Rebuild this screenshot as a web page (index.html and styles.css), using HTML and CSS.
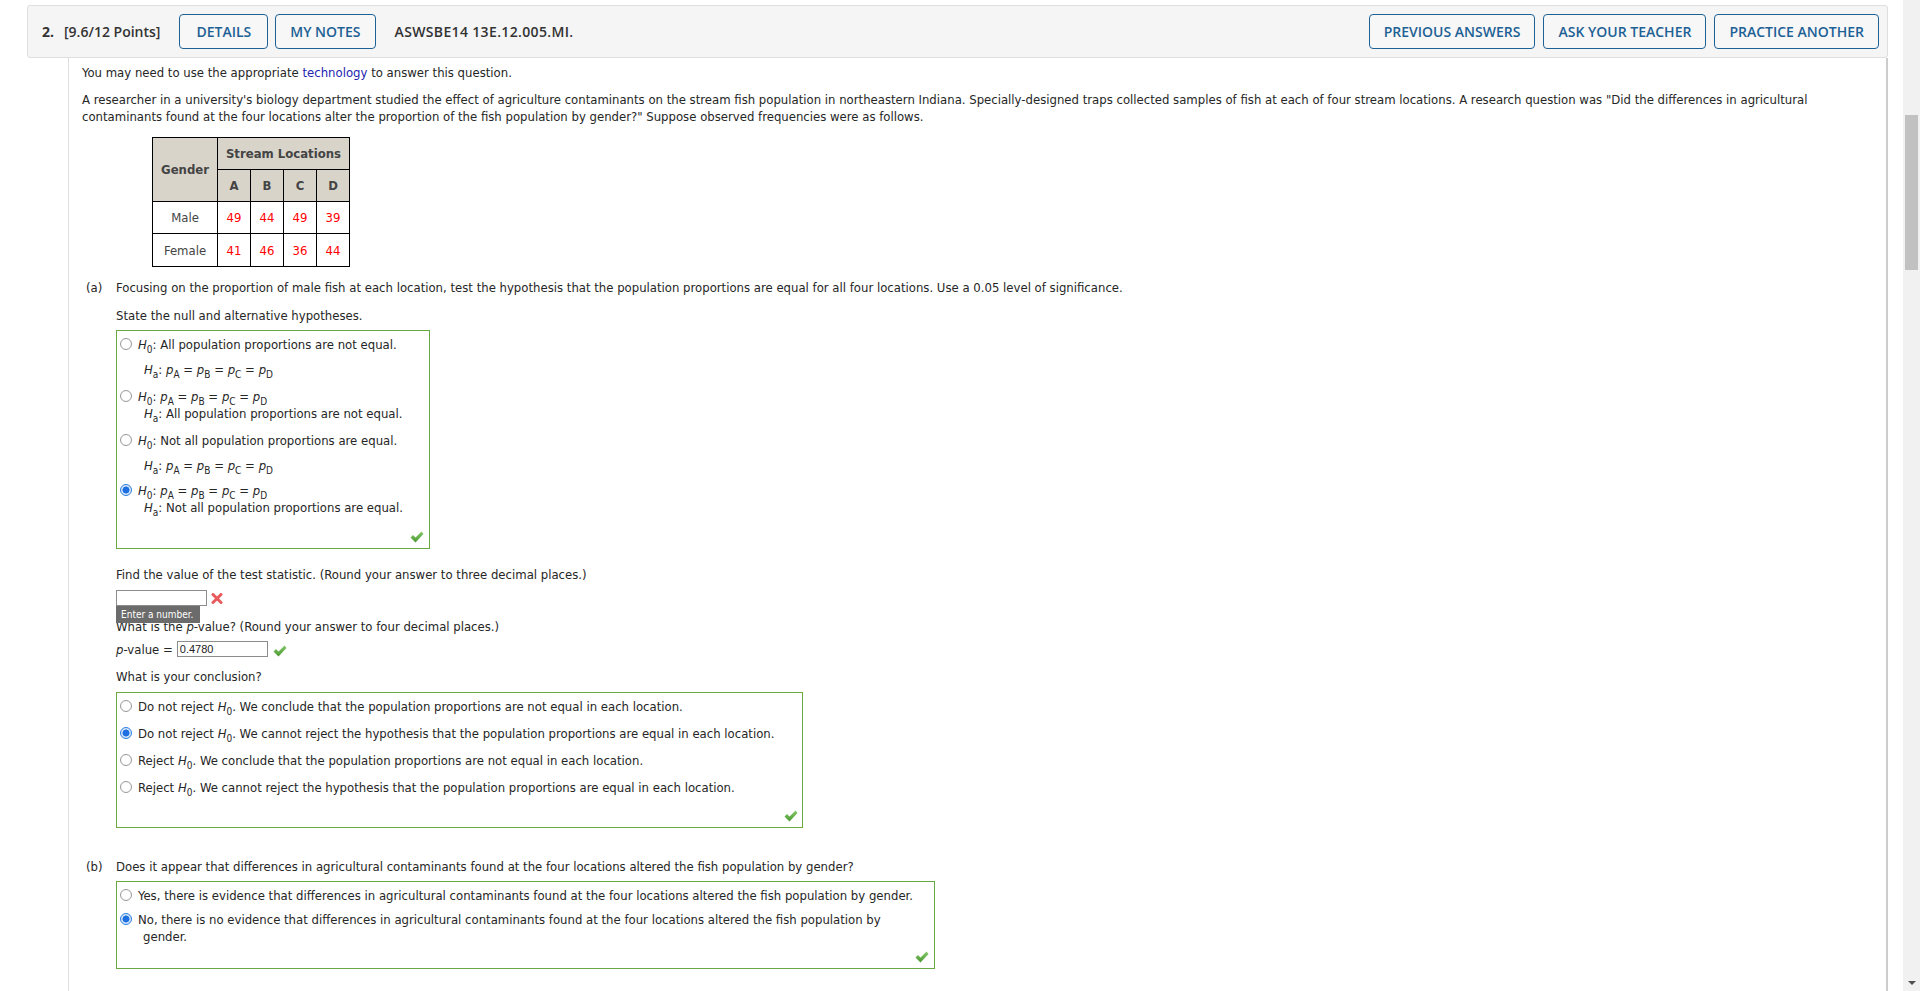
FILE: index.html
```html
<!DOCTYPE html>
<html>
<head>
<meta charset="utf-8">
<link rel="stylesheet" href="styles.css">
</head>
<body>
<div class="page">
  <div class="qhead">
    <span class="qnum">2.</span>
    <span class="qpts">[9.6/12 Points]</span>
    <span class="btn b-details">DETAILS</span>
    <span class="btn b-notes">MY NOTES</span>
    <span class="qid">ASWSBE14 13E.12.005.MI.</span>
    <span class="spacer"></span>
    <span class="btn">PREVIOUS ANSWERS</span>
    <span class="btn">ASK YOUR TEACHER</span>
    <span class="btn">PRACTICE ANOTHER</span>
  </div>
  <div class="qbody">
    <p class="p1">You may need to use the appropriate <span class="link">technology</span> to answer this question.</p>
    <p class="p2">A researcher in a university's biology department studied the effect of agriculture contaminants on the stream fish population in northeastern Indiana. Specially-designed traps collected samples of fish at each of four stream locations. A research question was "Did the differences in agricultural<br>contaminants found at the four locations alter the proportion of the fish population by gender?" Suppose observed frequencies were as follows.</p>
    <table class="data">
      <tr><th rowspan="2" class="gh">Gender</th><th colspan="4" class="sh">Stream Locations</th></tr>
      <tr><th>A</th><th>B</th><th>C</th><th>D</th></tr>
      <tr class="r1"><td class="rl">Male</td><td class="v">49</td><td class="v">44</td><td class="v">49</td><td class="v">39</td></tr>
      <tr class="r2"><td class="rl">Female</td><td class="v">41</td><td class="v">46</td><td class="v">36</td><td class="v">44</td></tr>
    </table>

    <div class="part pa">
      <div class="plabel">(a)</div>
      <div class="pcol">
        <div class="ln">Focusing on the proportion of male fish at each location, test the hypothesis that the population proportions are equal for all four locations. Use a 0.05 level of significance.</div>
        <div class="ln st">State the null and alternative hypotheses.</div>
        <div class="box hyp">
          <div class="opt o1">
            <span class="radio"></span>
            <div class="lbl">
              <div class="ln"><i>H</i><sub>0</sub>: All population proportions are not equal.</div>
              <div class="ln m ind"><i>H</i><sub>a</sub>: <i>p</i><sub>A</sub> = <i>p</i><sub>B</sub> = <i>p</i><sub>C</sub> = <i>p</i><sub>D</sub></div>
            </div>
          </div>
          <div class="opt o2 mf">
            <span class="radio"></span>
            <div class="lbl">
              <div class="ln m"><i>H</i><sub>0</sub>: <i>p</i><sub>A</sub> = <i>p</i><sub>B</sub> = <i>p</i><sub>C</sub> = <i>p</i><sub>D</sub></div>
              <div class="ln ind"><i>H</i><sub>a</sub>: All population proportions are not equal.</div>
            </div>
          </div>
          <div class="opt o3">
            <span class="radio"></span>
            <div class="lbl">
              <div class="ln"><i>H</i><sub>0</sub>: Not all population proportions are equal.</div>
              <div class="ln m ind"><i>H</i><sub>a</sub>: <i>p</i><sub>A</sub> = <i>p</i><sub>B</sub> = <i>p</i><sub>C</sub> = <i>p</i><sub>D</sub></div>
            </div>
          </div>
          <div class="opt o4 mf">
            <span class="radio on"></span>
            <div class="lbl">
              <div class="ln m"><i>H</i><sub>0</sub>: <i>p</i><sub>A</sub> = <i>p</i><sub>B</sub> = <i>p</i><sub>C</sub> = <i>p</i><sub>D</sub></div>
              <div class="ln ind"><i>H</i><sub>a</sub>: Not all population proportions are equal.</div>
            </div>
          </div>
          <div class="mark hyp-mark"><svg class="check" width="14" height="12" viewBox="0 0 14 12"><defs><linearGradient id="g1" x1="0" y1="0" x2="0" y2="1"><stop offset="0" stop-color="#86c96a"/><stop offset="1" stop-color="#4a9a32"/></linearGradient></defs><polygon points="0.5,6.5 3,4 5.5,6.5 11.5,0.5 13.5,3 5.5,11.5" fill="url(#g1)"/></svg></div>
        </div>

        <div class="ln fv">Find the value of the test statistic. (Round your answer to three decimal places.)</div>
        <div class="inrow ts">
          <span class="inwrap"><span class="input"></span><span class="tip">Enter a number.</span></span>
          <svg class="cross" width="12" height="11" viewBox="0 0 12 11"><path d="M2 1.5 L10 9.5 M10 1.5 L2 9.5" stroke="#e85a5c" stroke-width="3" stroke-linecap="round"/></svg>
        </div>
        <div class="ln pq">What is the <i>p</i>-value? (Round your answer to four decimal places.)</div>
        <div class="inrow pv">
          <span class="pl"><i>p</i>-value =</span>
          <span class="input val">0.4780</span>
          <svg class="check" width="14" height="12" viewBox="0 0 14 12"><defs><linearGradient id="g2" x1="0" y1="0" x2="0" y2="1"><stop offset="0" stop-color="#86c96a"/><stop offset="1" stop-color="#4a9a32"/></linearGradient></defs><polygon points="0.5,6.5 3,4 5.5,6.5 11.5,0.5 13.5,3 5.5,11.5" fill="url(#g2)"/></svg>
        </div>
        <div class="ln wc">What is your conclusion?</div>
        <div class="box conc">
          <div class="copt first"><span class="radio"></span><div class="lbl">Do not reject <i>H</i><sub>0</sub>. We conclude that the population proportions are not equal in each location.</div></div>
          <div class="copt"><span class="radio on"></span><div class="lbl">Do not reject <i>H</i><sub>0</sub>. We cannot reject the hypothesis that the population proportions are equal in each location.</div></div>
          <div class="copt"><span class="radio"></span><div class="lbl">Reject <i>H</i><sub>0</sub>. We conclude that the population proportions are not equal in each location.</div></div>
          <div class="copt"><span class="radio"></span><div class="lbl">Reject <i>H</i><sub>0</sub>. We cannot reject the hypothesis that the population proportions are equal in each location.</div></div>
          <div class="mark conc-mark"><svg class="check" width="14" height="12" viewBox="0 0 14 12"><defs><linearGradient id="g3" x1="0" y1="0" x2="0" y2="1"><stop offset="0" stop-color="#86c96a"/><stop offset="1" stop-color="#4a9a32"/></linearGradient></defs><polygon points="0.5,6.5 3,4 5.5,6.5 11.5,0.5 13.5,3 5.5,11.5" fill="url(#g3)"/></svg></div>
        </div>
      </div>
    </div>

    <div class="part pb">
      <div class="plabel">(b)</div>
      <div class="pcol">
        <div class="ln">Does it appear that differences in agricultural contaminants found at the four locations altered the fish population by gender?</div>
        <div class="box bbox">
          <div class="copt first"><span class="radio"></span><div class="lbl">Yes, there is evidence that differences in agricultural contaminants found at the four locations altered the fish population by gender.</div></div>
          <div class="copt second"><span class="radio on"></span><div class="lbl hang">No, there is no evidence that differences in agricultural contaminants found at the four locations altered the fish population by<br>gender.</div></div>
          <div class="mark b-mark"><svg class="check" width="14" height="12" viewBox="0 0 14 12"><defs><linearGradient id="g4" x1="0" y1="0" x2="0" y2="1"><stop offset="0" stop-color="#86c96a"/><stop offset="1" stop-color="#4a9a32"/></linearGradient></defs><polygon points="0.5,6.5 3,4 5.5,6.5 11.5,0.5 13.5,3 5.5,11.5" fill="url(#g4)"/></svg></div>
        </div>
      </div>
    </div>
  </div>
</div>
<div class="scrollbar">
  <div class="thumb"></div>
  <div class="arrow"></div>
</div>
</body>
</html>
```

FILE: styles.css
```css
* { box-sizing: border-box; }
html, body { margin: 0; height: 991px; overflow: hidden; }
body {
  display: flex;
  background: #fff;
  font-family: "DejaVu Sans Condensed", "DejaVu Sans", sans-serif;
  font-size: 13px;
  color: #262626;
}
.page { flex: 1; min-width: 0; padding: 5px 15px 0 27px; }

/* header */
.qhead {
  display: flex;
  align-items: center;
  height: 53px;
  background: #f5f5f5;
  border: 1px solid #dedede;
  border-radius: 3px;
  padding: 0 8px 0 14px;
  font-family: "Open Sans", sans-serif;
  font-size: 14px;
  color: #333;
}
.qnum { font-weight: 700; }
.qpts { font-weight: 600; margin-left: 10px; margin-right: 19px; }
.qid { font-weight: 600; margin-left: 19px; letter-spacing: 0.35px; }
.spacer { flex: 1; }
.btn {
  display: flex;
  align-items: center;
  height: 35px;
  padding: 0 14px;
  border: 1px solid #1d6195;
  border-radius: 4px;
  background: #f7f7f7;
  color: #1d6195;
  font-weight: 600;
  margin-left: 8px;
}
.b-details { margin-left: 0; padding: 0 16px; }
.b-notes { margin-left: 7px; }

/* body */
.qbody {
  margin-left: 41px;
  height: 940px;
  border-left: 1px solid #dedede;
  border-right: 2px solid #cdcdcd;
  padding: 6px 0 0 13px;
}
p { margin: 0; line-height: 17px; }
.p2 { margin-top: 10px; white-space: nowrap; }
.link { color: #2323b0; }

.data {
  margin: 12px 0 0 70px;
  border-collapse: collapse;
  color: #444;
}
.data th, .data td {
  border: 1px solid #000;
  text-align: center;
  padding: 0;
  width: 33px;
}
.data th { background: #d8d4ca; font-weight: 700; height: 32px; }
.data th.gh { width: 65px; }
.data th.sh { height: 32px; }
.data td { height: 32px; background: #fff; }
.data .r2 td { height: 33px; }
.data td.rl { width: 65px; }
.data td.v { color: #f00; }

.part { display: flex; }
.pa { margin-top: 12px; }
.pb { margin-top: 30px; }
.plabel { width: 34px; padding-left: 4px; line-height: 17px; }
.pcol { flex: 1; min-width: 0; }
.ln { line-height: 17px; white-space: nowrap; }
.st { margin-top: 11px; }

i { font-style: italic; }
sub {
  font-size: 10px;
  line-height: 0;
  vertical-align: -4px;
}

.box {
  border: 1px solid #6aa843;
  margin-top: 6px;
  padding: 5px 0 4px 3px;
}
.hyp { width: 314px; }
.conc { width: 687px; margin-top: 7px; }
.bbox { width: 819px; margin-top: 6px; }

.opt { display: flex; align-items: flex-start; }
.o2 { margin-top: 2px; }
.o3 { margin-top: 10px; }
.o4 { margin-top: 0; }
.opt .radio { margin-top: 2px; }
.opt.mf .radio { margin-top: 10px; }
.ln.m { height: 25px; padding-top: 8px; }
.ln.ind { padding-left: 6px; }

.radio {
  flex: none;
  width: 12px;
  height: 12px;
  border-radius: 50%;
  border: 1px solid #9a9a9a;
  background: radial-gradient(circle, #fff 0, #fff 50%, #f0f0f0 100%);
  margin-right: 6px;
}
.radio.on {
  border: 1px solid #2a7de1;
  background: radial-gradient(circle, #1e6fe0 0, #1e6fe0 3.2px, #cfe2fb 3.8px, #e6f0fd 100%);
}

.copt { display: flex; align-items: flex-start; margin-top: 10px; line-height: 17px; }
.copt.first { margin-top: 0; }
.copt .radio { margin-top: 2px; }
.bbox .copt.second { margin-top: 7px; }
.lbl.hang { padding-left: 5px; text-indent: -5px; }
.lbl { white-space: nowrap; }

.mark { display: flex; justify-content: flex-end; height: 14px; align-items: center; padding-right: 5px; }
.hyp-mark { margin-top: 14px; }
.conc-mark { margin-top: 13px; padding-right: 4px; }
.b-mark { margin-top: 5px; padding-right: 5px; }

.fv { margin-top: 17px; }
.inrow { display: flex; align-items: center; height: 16px; }
.ts { margin-top: 7px; }
.inwrap { position: relative; display: block; }
.input {
  display: block;
  width: 91px;
  height: 16px;
  border: 1px solid #8c8c8c;
  background: #fff;
  font-family: "Liberation Sans", Arial, sans-serif;
  font-size: 11px;
  line-height: 14px;
  padding-left: 2px;
  color: #222;
}
.tip {
  position: absolute;
  left: 0;
  top: 16px;
  width: 84px;
  height: 17px;
  background: #6b6b6b;
  color: #fff;
  font-size: 10px;
  line-height: 17px;
  padding-left: 5px;
  white-space: nowrap;
  z-index: 2;
}
.cross { margin-left: 4px; }
.pq { margin-top: 12px; }
.pv { margin-top: 6px; }
.pl { margin-right: 4px; }
.pv .check { margin-left: 5px; margin-top: 4px; }
.wc { margin-top: 11px; }

/* scrollbar */
.scrollbar {
  flex: none;
  width: 17px;
  background: #f1f1f1;
  display: flex;
  flex-direction: column;
  align-items: center;
}
.thumb { margin-top: 115px; width: 13px; height: 155px; background: #c1c1c1; }
.arrow {
  margin-top: auto;
  margin-bottom: 6px;
  width: 0;
  height: 0;
  border-left: 4px solid transparent;
  border-right: 4px solid transparent;
  border-top: 4px solid #505050;
}
```
